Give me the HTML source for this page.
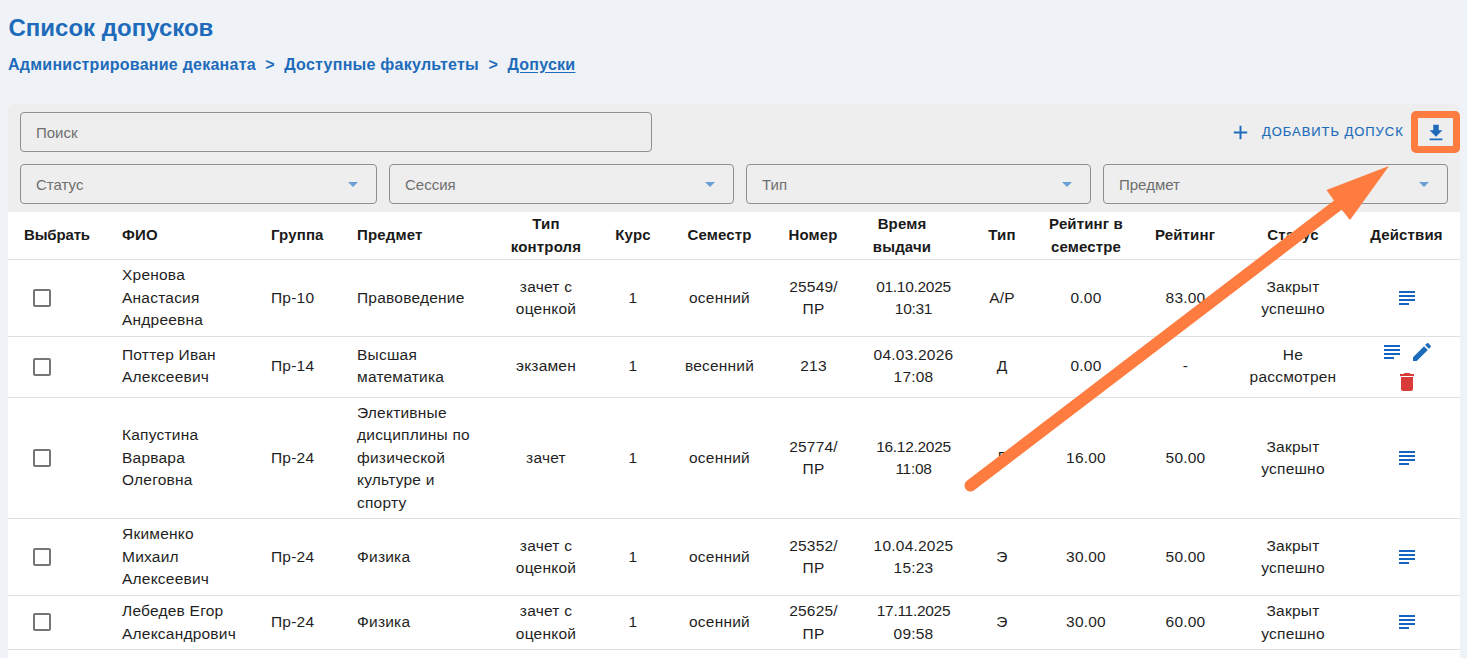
<!DOCTYPE html>
<html><head><meta charset="utf-8">
<style>
html,body{margin:0;padding:0;}
body{width:1467px;height:658px;overflow:hidden;background:#eff3f7;position:relative;font-family:"Liberation Sans",sans-serif;}
.a{position:absolute;white-space:nowrap;}
.title{left:8.5px;top:11.7px;font-size:24px;font-weight:bold;color:#1d6bba;line-height:32px;}
.bc{left:8px;top:55px;font-size:16px;font-weight:bold;color:#1d6bba;line-height:20px;letter-spacing:0.25px;}
.bc u{text-decoration:underline;text-underline-offset:2px;}
.panel{left:8px;top:104px;width:1452px;height:108px;background:#eeeeee;border-radius:6px 6px 0 0;}
.tbl{left:8px;top:212px;width:1452px;height:446px;background:#ffffff;}
.inp{box-sizing:border-box;border:1px solid #8f8f8f;border-radius:4px;height:40px;background:#eeeeee;}
.ph{font-size:15px;color:#6f6f6f;line-height:20px;}
.hline{position:absolute;left:8px;width:1452px;height:1px;background:#e0e0e0;}
.cell{position:absolute;white-space:nowrap;font-size:15.5px;line-height:22.5px;color:#1f1f1f;letter-spacing:0.22px;}
.hd{font-weight:bold;color:#1a1a1a;letter-spacing:0.15px;font-size:15px;}
.cb{position:absolute;box-sizing:border-box;width:18px;height:18px;border:2px solid #767676;border-radius:2px;}
.btn{font-size:13px;font-weight:normal;-webkit-text-stroke:0.15px #1d6bba;color:#1d6bba;letter-spacing:0.95px;line-height:20px;}
</style></head><body>

<div class="a title">Список допусков</div>
<div class="a bc">Администрирование деканата&nbsp;&nbsp;&gt;&nbsp;&nbsp;Доступные факультеты&nbsp;&nbsp;&gt;&nbsp;&nbsp;<u>Допуски</u></div>
<div class="a panel"></div>
<div class="a tbl"></div>
<div class="a inp" style="left:20px;top:112px;width:632px;"></div>
<div class="a ph" style="left:36px;top:123px;">Поиск</div>
<div class="a inp" style="left:20px;top:164px;width:357px;"></div>
<div class="a ph" style="left:36px;top:175px;">Статус</div>
<svg style="position:absolute;left:341px;top:172px" width="24" height="24" viewBox="0 0 24 24" fill="#6a9fd6"><path d="M7 10l5 5 5-5z"/></svg>
<div class="a inp" style="left:389px;top:164px;width:345px;"></div>
<div class="a ph" style="left:405px;top:175px;">Сессия</div>
<svg style="position:absolute;left:698px;top:172px" width="24" height="24" viewBox="0 0 24 24" fill="#6a9fd6"><path d="M7 10l5 5 5-5z"/></svg>
<div class="a inp" style="left:746px;top:164px;width:345px;"></div>
<div class="a ph" style="left:762px;top:175px;">Тип</div>
<svg style="position:absolute;left:1055px;top:172px" width="24" height="24" viewBox="0 0 24 24" fill="#6a9fd6"><path d="M7 10l5 5 5-5z"/></svg>
<div class="a inp" style="left:1103px;top:164px;width:345px;"></div>
<div class="a ph" style="left:1119px;top:175px;">Предмет</div>
<svg style="position:absolute;left:1412px;top:172px" width="24" height="24" viewBox="0 0 24 24" fill="#6a9fd6"><path d="M7 10l5 5 5-5z"/></svg>
<svg style="position:absolute;left:1228.5px;top:121px" width="23" height="23" viewBox="0 0 24 24" fill="#1d6bba"><path d="M19 13h-6v6h-2v-6H5v-2h6V5h2v6h6v2z"/></svg>
<div class="a btn" style="left:1262px;top:122px;">ДОБАВИТЬ ДОПУСК</div>
<svg style="position:absolute;left:1425px;top:121.5px" width="22" height="22" viewBox="0 0 24 24" fill="#1d6bba"><path d="M19 9h-4V3H9v6H5l7 7 7-7zM5 18v2h14v-2H5z"/></svg>
<div class="hline" style="top:259px"></div>
<div class="hline" style="top:336px"></div>
<div class="hline" style="top:397px"></div>
<div class="hline" style="top:518px"></div>
<div class="hline" style="top:595px"></div>
<div class="hline" style="top:649px"></div>
<div class="cell hd" style="left:24px;top:224.25px;letter-spacing:-0.15px;">Выбрать</div>
<div class="cell hd" style="left:122px;top:224.25px;">ФИО</div>
<div class="cell hd" style="left:271px;top:224.25px;">Группа</div>
<div class="cell hd" style="left:357px;top:224.25px;">Предмет</div>
<div class="cell hd" style="left:446px;width:200px;text-align:center;top:213.0px">Тип<br>контроля</div>
<div class="cell hd" style="left:533px;width:200px;text-align:center;top:224.25px">Курс</div>
<div class="cell hd" style="left:619.5px;width:200px;text-align:center;top:224.25px">Семестр</div>
<div class="cell hd" style="left:713px;width:200px;text-align:center;top:224.25px">Номер</div>
<div class="cell hd" style="left:802px;width:200px;text-align:center;top:213.0px">Время<br>выдачи</div>
<div class="cell hd" style="left:902px;width:200px;text-align:center;top:224.25px">Тип</div>
<div class="cell hd" style="left:986px;width:200px;text-align:center;top:213.0px">Рейтинг в<br>семестре</div>
<div class="cell hd" style="left:1085px;width:200px;text-align:center;top:224.25px">Рейтинг</div>
<div class="cell hd" style="left:1193px;width:200px;text-align:center;top:224.25px">Статус</div>
<div class="cell hd" style="left:1306.5px;width:200px;text-align:center;top:224.25px">Действия</div>
<div class="cb" style="left:33px;top:289px"></div>
<div class="cell" style="left:122px;top:264.25px">Хренова<br>Анастасия<br>Андреевна</div>
<div class="cell" style="left:271px;top:286.75px">Пр-10</div>
<div class="cell" style="left:357px;top:286.75px">Правоведение</div>
<div class="cell" style="left:446px;width:200px;text-align:center;top:275.5px;">зачет с<br>оценкой</div>
<div class="cell" style="left:533px;width:200px;text-align:center;top:286.75px;">1</div>
<div class="cell" style="left:619.5px;width:200px;text-align:center;top:286.75px;">осенний</div>
<div class="cell" style="left:713.5px;width:200px;text-align:center;top:275.5px;">25549/<br>ПР</div>
<div class="cell" style="left:813.5px;width:200px;text-align:center;top:275.5px;"><span style="letter-spacing:-0.3px">01.10.2025</span><br><span style="letter-spacing:-0.3px">10:31</span></div>
<div class="cell" style="left:902px;width:200px;text-align:center;top:286.75px;">А/Р</div>
<div class="cell" style="left:986px;width:200px;text-align:center;top:286.75px;">0.00</div>
<div class="cell" style="left:1085.5px;width:200px;text-align:center;top:286.75px;">83.00</div>
<div class="cell" style="left:1193px;width:200px;text-align:center;top:275.5px;">Закрыт<br>успешно</div>
<svg style="position:absolute;left:1395px;top:286px" width="24" height="24" viewBox="0 0 24 24" fill="#1565c0"><path d="M14 17H4v2h10v-2zm6-8H4v2h16V9zM4 15h16v-2H4v2zM4 5v2h16V5H4z"/></svg>
<div class="cb" style="left:33px;top:358px"></div>
<div class="cell" style="left:122px;top:343.8px">Поттер Иван<br>Алексеевич</div>
<div class="cell" style="left:271px;top:355.05px">Пр-14</div>
<div class="cell" style="left:357px;top:343.8px">Высшая<br>математика</div>
<div class="cell" style="left:446px;width:200px;text-align:center;top:355.05px;">экзамен</div>
<div class="cell" style="left:533px;width:200px;text-align:center;top:355.05px;">1</div>
<div class="cell" style="left:619.5px;width:200px;text-align:center;top:355.05px;">весенний</div>
<div class="cell" style="left:713.5px;width:200px;text-align:center;top:355.05px;">213</div>
<div class="cell" style="left:813.5px;width:200px;text-align:center;top:343.8px;">04.03.2026<br>17:08</div>
<div class="cell" style="left:902px;width:200px;text-align:center;top:355.05px;">Д</div>
<div class="cell" style="left:986px;width:200px;text-align:center;top:355.05px;">0.00</div>
<div class="cell" style="left:1085.5px;width:200px;text-align:center;top:355.05px;">-</div>
<div class="cell" style="left:1193px;width:200px;text-align:center;top:343.8px;">Не<br>рассмотрен</div>
<svg style="position:absolute;left:1380px;top:340.0px" width="24" height="24" viewBox="0 0 24 24" fill="#1565c0"><path d="M14 17H4v2h10v-2zm6-8H4v2h16V9zM4 15h16v-2H4v2zM4 5v2h16V5H4z"/></svg>
<svg style="position:absolute;left:1410px;top:340.0px" width="24" height="24" viewBox="0 0 24 24" fill="#1d6bba"><path d="M3 17.25V21h3.75L17.81 9.94l-3.75-3.75L3 17.25zM20.71 7.04c.39-.39.39-1.02 0-1.41l-2.34-2.34c-.39-.39-1.02-.39-1.41 0l-1.83 1.83 3.75 3.75 1.83-1.83z"/></svg>
<svg style="position:absolute;left:1395px;top:370.0px" width="24" height="24" viewBox="0 0 24 24" fill="#d93a3a"><path d="M6 19c0 1.1.9 2 2 2h8c1.1 0 2-.9 2-2V7H6v12zM19 4h-3.5l-1-1h-5l-1 1H5v2h14V4z"/></svg>
<div class="cb" style="left:33px;top:449px"></div>
<div class="cell" style="left:122px;top:424.25px">Капустина<br>Варвара<br>Олеговна</div>
<div class="cell" style="left:271px;top:446.75px">Пр-24</div>
<div class="cell" style="left:357px;top:401.75px">Элективные<br>дисциплины по<br>физической<br>культуре и<br>спорту</div>
<div class="cell" style="left:446px;width:200px;text-align:center;top:446.75px;">зачет</div>
<div class="cell" style="left:533px;width:200px;text-align:center;top:446.75px;">1</div>
<div class="cell" style="left:619.5px;width:200px;text-align:center;top:446.75px;">осенний</div>
<div class="cell" style="left:713.5px;width:200px;text-align:center;top:435.5px;">25774/<br>ПР</div>
<div class="cell" style="left:813.5px;width:200px;text-align:center;top:435.5px;"><span style="letter-spacing:-0.3px">16.12.2025</span><br><span style="letter-spacing:-0.3px">11:08</span></div>
<div class="cell" style="left:903.5px;width:200px;text-align:center;top:445.75px;">П</div>
<div class="cell" style="left:986px;width:200px;text-align:center;top:446.75px;">16.00</div>
<div class="cell" style="left:1085.5px;width:200px;text-align:center;top:446.75px;">50.00</div>
<div class="cell" style="left:1193px;width:200px;text-align:center;top:435.5px;">Закрыт<br>успешно</div>
<svg style="position:absolute;left:1395px;top:446px" width="24" height="24" viewBox="0 0 24 24" fill="#1565c0"><path d="M14 17H4v2h10v-2zm6-8H4v2h16V9zM4 15h16v-2H4v2zM4 5v2h16V5H4z"/></svg>
<div class="cb" style="left:33px;top:548px"></div>
<div class="cell" style="left:122px;top:523.25px">Якименко<br>Михаил<br>Алексеевич</div>
<div class="cell" style="left:271px;top:545.75px">Пр-24</div>
<div class="cell" style="left:357px;top:545.75px">Физика</div>
<div class="cell" style="left:446px;width:200px;text-align:center;top:534.5px;">зачет с<br>оценкой</div>
<div class="cell" style="left:533px;width:200px;text-align:center;top:545.75px;">1</div>
<div class="cell" style="left:619.5px;width:200px;text-align:center;top:545.75px;">осенний</div>
<div class="cell" style="left:713.5px;width:200px;text-align:center;top:534.5px;">25352/<br>ПР</div>
<div class="cell" style="left:813.5px;width:200px;text-align:center;top:534.5px;">10.04.2025<br>15:23</div>
<div class="cell" style="left:902px;width:200px;text-align:center;top:545.75px;">Э</div>
<div class="cell" style="left:986px;width:200px;text-align:center;top:545.75px;">30.00</div>
<div class="cell" style="left:1085.5px;width:200px;text-align:center;top:545.75px;">50.00</div>
<div class="cell" style="left:1193px;width:200px;text-align:center;top:534.5px;">Закрыт<br>успешно</div>
<svg style="position:absolute;left:1395px;top:545px" width="24" height="24" viewBox="0 0 24 24" fill="#1565c0"><path d="M14 17H4v2h10v-2zm6-8H4v2h16V9zM4 15h16v-2H4v2zM4 5v2h16V5H4z"/></svg>
<div class="cb" style="left:33px;top:613px"></div>
<div class="cell" style="left:122px;top:600.0px">Лебедев Егор<br>Александрович</div>
<div class="cell" style="left:271px;top:611.25px">Пр-24</div>
<div class="cell" style="left:357px;top:611.25px">Физика</div>
<div class="cell" style="left:446px;width:200px;text-align:center;top:600.0px;">зачет с<br>оценкой</div>
<div class="cell" style="left:533px;width:200px;text-align:center;top:611.25px;">1</div>
<div class="cell" style="left:619.5px;width:200px;text-align:center;top:611.25px;">осенний</div>
<div class="cell" style="left:713.5px;width:200px;text-align:center;top:600.0px;">25625/<br>ПР</div>
<div class="cell" style="left:813.5px;width:200px;text-align:center;top:600.0px;"><span style="letter-spacing:-0.3px">17.11.2025</span><br>09:58</div>
<div class="cell" style="left:902px;width:200px;text-align:center;top:611.25px;">Э</div>
<div class="cell" style="left:986px;width:200px;text-align:center;top:611.25px;">30.00</div>
<div class="cell" style="left:1085.5px;width:200px;text-align:center;top:611.25px;">60.00</div>
<div class="cell" style="left:1193px;width:200px;text-align:center;top:600.0px;">Закрыт<br>успешно</div>
<svg style="position:absolute;left:1395px;top:610px" width="24" height="24" viewBox="0 0 24 24" fill="#1565c0"><path d="M14 17H4v2h10v-2zm6-8H4v2h16V9zM4 15h16v-2H4v2zM4 5v2h16V5H4z"/></svg>
<div class="a" style="left:1411px;top:111px;width:49px;height:42px;box-sizing:border-box;border:7px solid #fe7c3f;border-radius:5px;"></div>
<svg class="a" style="left:0;top:0" width="1467" height="658" viewBox="0 0 1467 658">
<line x1="970.5" y1="485.5" x2="1338" y2="205" stroke="#fe7c3f" stroke-width="12" stroke-linecap="round"/>
<polygon points="1389,166 1326.5,190 1334,200.5 1342,210 1350,220" fill="#fe7c3f"/>
</svg>
</body></html>
